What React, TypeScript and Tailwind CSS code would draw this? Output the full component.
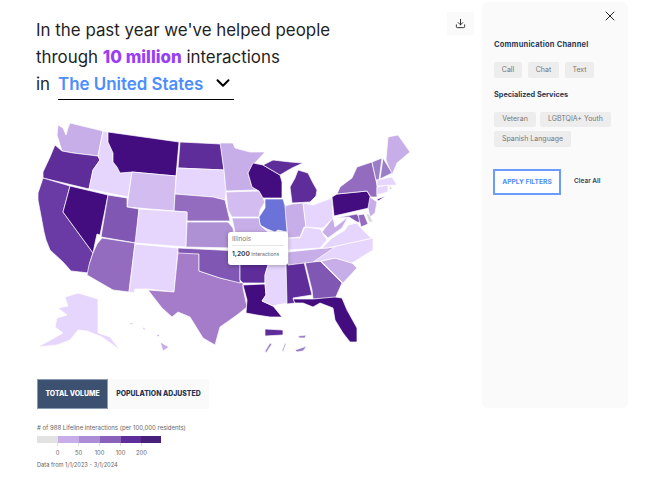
import React from "react";
import { X, Download, ChevronDown } from "lucide-react";

const L0 = "#e6d5fd", L1 = "#c8aee8", L1b = "#d3bcef", L2 = "#ae90d4", L2b = "#a47cca", L3 = "#936cc0", L3b = "#8058b4", L4 = "#5e2d9a", L4b = "#6a3aa5", L5 = "#430d80";

const states: [string, string][] = [
  [L1, "70,123 103,131 98,156 73,153 62,151 57,135 58,125 63,128 66,135 68,128"],
  [L4, "55,145 62,151 73,153 98,156 100,160 93,170 89,189 43,178 43,172 50,157"],
  [L4b, "43,178 70,186 63,212 93,253 90,262 89,273 71,271 63,262 50,250 46,240 44,232 38,200 38,193"],
  [L5, "70,186 108,195 100,235 97,234 95,243 93,253 63,212"],
  [L0, "103,131 108,132 108,142 113,153 113,162 117,167 120,173 132,172 128,197 89,189 93,170 100,160 98,156"],
  [L5, "108,132 179,142 176,176 132,172 120,173 117,167 113,162 113,153 108,142"],
  [L1b, "132,172 176,176 174,211 127,207"],
  [L4, "180,142 221,144 224,170 178,168"],
  [L0, "177,168 224,170 226,192 225,200 213,197 175,194"],
  [L3, "175,194 213,197 225,200 230,221 187,221 187,212 174,211"],
  [L3b, "108,195 127,198 127,207 139,209 136,243 101,237"],
  [L0, "139,209 187,212 186,247 135,243"],
  [L3, "102,238 135,243 129,292 113,290 87,275 89,265 93,253 97,244"],
  [L0, "135,244 178,248 174,292 148,289 135,289 134,293 129,292"],
  [L2b, "178,252 199,253 199,271 220,278 243,283 243,288 247,307 237,315 220,327 215,345 203,338 190,317 178,312 172,317 162,308 148,290 174,292"],
  [L3b, "178,248 240,251 240,283 220,278 199,271 199,254 178,253"],
  [L2, "187,222 228,222 233,228 235,248 186,247"],
  [L1, "220,143 233,143 235,148 250,152 265,152 253,165 248,173 252,187 257,190 226,191 224,170"],
  [L1b, "226,192 259,191 265,202 260,210 259,217 232,217 228,210"],
  [L5, "248,173 253,163 263,165 280,175 282,182 282,198 263,198 259,191 252,187"],
  ["#6b72d8", "265,199 283,199 287,212 287,232 278,230 275,232 267,229 260,225 259,217 265,208"],
  [L1, "232,218 259,218 260,225 268,232 272,248 276,252 272,262 240,262 235,248 235,232"],
  [L4, "240,262 272,262 268,265 265,275 265,283 243,283 240,280"],
  [L5, "243,285 265,284 266,295 262,301 273,306 282,317 270,317 257,315 246,313 247,300"],
  [L0, "268,265 286,263 287,303 277,305 273,306 262,301 266,295 265,283 265,275"],
  [L4, "286,263 304,262 312,295 293,298 295,303 287,304"],
  [L3b, "305,262 320,261 342,283 335,299 313,299 312,290"],
  [L5, "293,299 313,299 335,297 342,298 347,310 357,328 357,342 350,342 343,333 335,320 333,308 320,303 313,307 303,303 295,303"],
  [L1, "321,261 335,258 352,263 357,268 343,283"],
  [L0, "313,262 327,248 373,238 373,250 352,263 335,258 321,261"],
  [L1, "288,252 335,247 313,262 288,265"],
  [L0, "288,250 288,238 300,238 305,227 320,229 327,240 320,248"],
  [L1, "285,206 292,204 303,203 306,227 304,227 300,237 288,238 286,220"],
  [L0, "303,203 313,205 332,198 333,218 323,228 320,228 306,227"],
  [L4, "292,203 290,187 295,178 298,170 308,173 313,183 317,190 316,196 310,202"],
  [L4, "263,165 273,160 290,162 303,163 292,168 280,175"],
  [L5, "332,197 337,194 367,191 371,198 369,208 334,216"],
  [L3, "337,194 340,187 352,178 357,167 372,162 377,185 377,197 371,197 367,191"],
  [L1, "388,137 398,135 410,152 397,163 392,175 386,160"],
  ["#9a7ec8", "383,158 392,173 380,179"],
  ["#9a7ec8", "372,162 382,158 379,180 376,180"],
  [L0, "377,180 392,177 397,185 377,186"],
  [L0, "377,187 388,185 388,192 377,195"],
  ["#d8d8d8", "389,185 392,188 390,191"],
  [L1, "370,197 377,202 375,213 370,217 368,208"],
  [L3b, "335,218 357,214 363,223 357,222 349,217"],
  ["#d8d8d8", "366,214 369,214 373,222 369,222"],
  [L3, "358,215 364,214 368,224 361,227"],
  [L4, "377,199 386,196 378,201"],
  [L0, "332,238 345,230 348,225 357,223 360,227 370,237 373,238 327,248 322,248"],
  [L1, "322,232 333,218 335,227 348,217 342,228 328,238"],
  [L0, "65,297 78,293 98,299 98,333 110,337 120,350 102,337 87,331 78,330 70,340 57,345 38,347 63,333 55,327 57,318 67,315 58,308 68,306"],
  [L1, "160,342 169,347 163,351"],
  [L1, "129,323 133,323 132,325"],
  [L1, "142,327 146,329 144,330"],
  [L1, "156,334 160,335 158,337"],
  [L4, "265,329 283,330 283,335 265,336"],
  ["#9a7ec8", "270,343 272,344 266,353 265,351"],
  ["#9a7ec8", "285,343 286,344 283,352 282,351"],
  ["#9a7ec8", "295,350 307,346 303,351 297,352"],
  ["#9a7ec8", "298,336 306,335 305,338 299,338"],
];

export default function App() {
  return (
    <div className="relative flex h-[488px] w-[651px] overflow-hidden bg-white text-[#1f1f1f]" style={{ fontFamily: "Inter, 'Noto Sans', sans-serif" }}>
      <div className="flex w-[447px] flex-col pl-[36px]">
        <div className="flex h-[110px] flex-col pt-[17px] text-[16.9px] leading-[27px]">
          <p className="whitespace-nowrap">In the past year we've helped people</p>
          <p className="whitespace-nowrap">
            through <b className="font-extrabold text-[#9b3df5]">10 million</b> interactions
          </p>
          <div className="flex whitespace-nowrap">
            <span className="w-[22px]">in</span>
            <div className="flex h-[29px] w-[176px] items-start justify-between border-b-[1.5px] border-black">
              <b className="font-semibold text-[#4c8dff]">The United States</b>
              <ChevronDown size={22} strokeWidth={2.2} className="mt-px text-black" />
            </div>
          </div>
        </div>
        <div className="relative -ml-[36px] h-[260px] w-[447px]">
          <svg width="447" height="260" viewBox="0 110 447 260" className="block">
            {states.map(([c, p], i) => (
              <polygon key={i} points={p} fill={c} stroke="#ffffff" strokeWidth="0.7" strokeLinejoin="round" />
            ))}
          </svg>
          <div className="absolute left-[228px] top-[122px] h-[33px] w-[60px] rounded-[3px] bg-white px-[4px] pt-[2px] shadow-[0_1px_4px_rgba(0,0,0,0.3)]">
            <div className="border-b border-[#e5e5e5] pb-[1px] text-[6.5px] leading-[10px] text-[#777]">Illinois</div>
            <div className="mt-[3px] whitespace-nowrap text-[5px] leading-[10px] text-[#666]">
              <b className="text-[6.5px] font-bold text-[#444]">1,200</b> Interactions
            </div>
          </div>
        </div>
        <div className="ml-px mt-[9px] flex h-[30px] w-[172px] text-[6.9px] font-extrabold">
          <div className="flex w-[71px] items-center justify-center border border-[#8b9bb3] bg-[#3c5070] pt-px text-white">TOTAL VOLUME</div>
          <div className="flex w-[101px] items-center justify-center bg-[#fafafa] pt-px text-[#1f3354]">POPULATION ADJUSTED</div>
        </div>
        <div className="ml-px mt-[15px] whitespace-nowrap text-[6px] leading-[8px] text-[#666]"># of 988 Lifeline interactions (per 100,000 residents)</div>
        <div className="ml-px mt-[4px] flex h-[7px] w-[124px]">
          <div className="w-[21px] bg-[#e2e2e2]" />
          <div className="w-[21px] bg-[#c8aee8]" />
          <div className="w-[21px] bg-[#ac8cd6]" />
          <div className="w-[21px] bg-[#8a62bb]" />
          <div className="w-[20px] bg-[#5e2d9a]" />
          <div className="w-[20px] bg-[#48207c]" />
        </div>
        <div className="ml-[11px] flex h-[6px]">
          {[0, 1, 2, 3, 4].map((i) => (
            <span key={i} className="flex w-[21px] justify-center"><span className="h-[3px] w-px bg-[#dddddd]" /></span>
          ))}
        </div>
        <div className="ml-[11px] flex text-[5.8px] leading-[8px] text-[#666]">
          {["0", "50", "100", "100", "200"].map((t, i) => (
            <span key={i} className="w-[21px] text-center">{t}</span>
          ))}
        </div>
        <div className="ml-px mt-[4px] whitespace-nowrap text-[5.7px] leading-[8px] text-[#666]">Data from 1/1/2023 - 3/1/2024</div>
      </div>
      <div className="w-[35px] pt-[12px]">
        <div className="flex h-[23px] w-[27px] items-center justify-center bg-[#fafafa]">
          <Download size={11} strokeWidth={2} className="text-[#222]" />
        </div>
      </div>
      <div className="mt-[2px] flex h-[406px] w-[146px] flex-col rounded-[6px] bg-[#fafafa] pl-[12px]">
        <div className="flex justify-end pr-[10px] pt-[6px]">
          <X size={16} strokeWidth={1.5} className="text-[#222]" />
        </div>
        <div className="mt-[16px] whitespace-nowrap text-[7.5px] font-bold leading-[10px] tracking-[0.2px] text-[#2b3a55]">Communication Channel</div>
        <div className="mt-[12px] flex gap-[6px] text-[7px] text-[#777]">
          <span className="flex h-[16px] w-[28px] items-center justify-center rounded-[2px] bg-[#ededed]">Call</span>
          <span className="flex h-[16px] w-[31px] items-center justify-center rounded-[2px] bg-[#ededed]">Chat</span>
          <span className="flex h-[16px] w-[29px] items-center justify-center rounded-[2px] bg-[#ededed]">Text</span>
        </div>
        <div className="mt-[12px] whitespace-nowrap text-[7.3px] font-bold leading-[10px] text-[#2b3a55]">Specialized Services</div>
        <div className="mt-[12px] flex flex-wrap gap-x-[4px] gap-y-[4px] text-[7px] text-[#777]">
          <span className="flex h-[15px] w-[42px] items-center justify-center rounded-[2px] bg-[#ededed]">Veteran</span>
          <span className="flex h-[15px] w-[71px] items-center justify-center whitespace-nowrap rounded-[2px] bg-[#ededed]">LGBTQIA+ Youth</span>
          <span className="flex h-[16px] w-[77px] items-center justify-center whitespace-nowrap rounded-[2px] bg-[#ededed]">Spanish Language</span>
        </div>
        <div className="mt-[22px] flex items-center">
          <button className="-ml-px h-[26px] w-[68px] border-2 border-[#6b9bfb] bg-white text-[6.7px] font-bold text-[#4c8dff]">APPLY FILTERS</button>
          <span className="ml-[13px] text-[6.5px] font-semibold text-[#33415c]">Clear All</span>
        </div>
      </div>
    </div>
  );
}
